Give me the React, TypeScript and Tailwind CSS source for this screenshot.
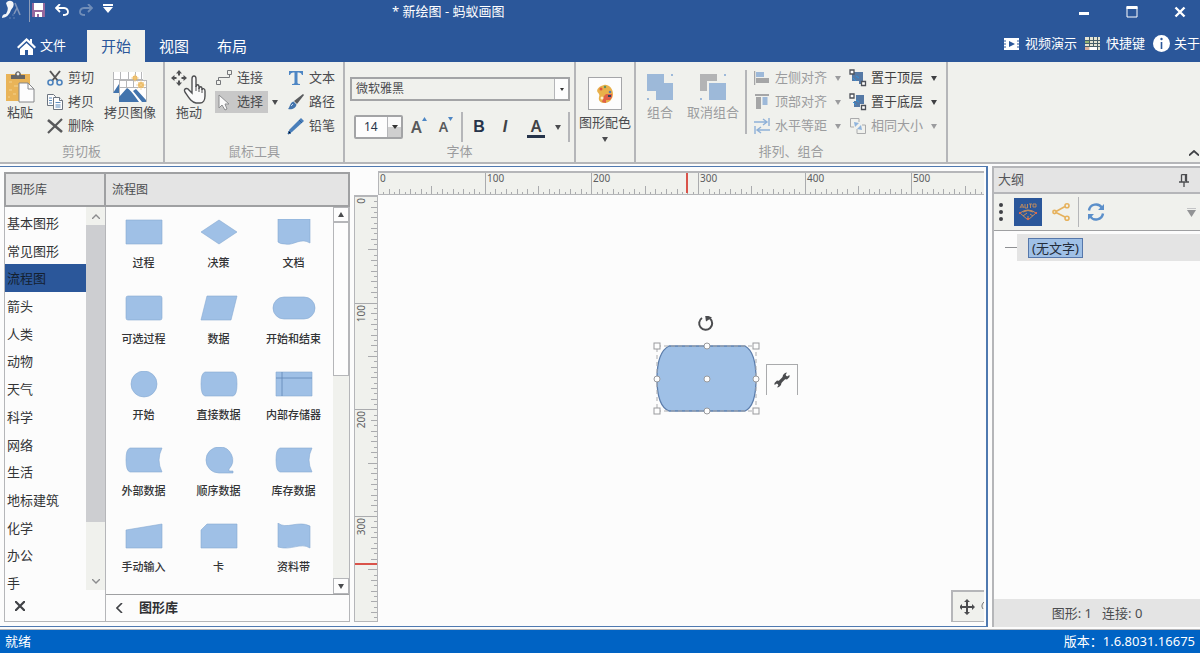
import type { ReactNode } from 'react';

const UNIT = 16 / 15; // screen pixels per ruler unit

const CATEGORIES = ['基本图形', '常见图形', '流程图', '箭头', '人类', '动物', '天气', '科学', '网络', '生活', '地标建筑', '化学', '办公', '手'];

const SHAPES: { label: string; d: string; line?: string }[] = [
  { label: '过程', d: 'M4 1H40V25H4Z' },
  { label: '决策', d: 'M22 1L40 13L22 25L4 13Z' },
  { label: '文档', d: 'M6 0H38V24C28 18 22 27 13 25Q8 25 6 23Z' },
  { label: '可选过程', d: 'M6 1H38Q40 1 40 3V23Q40 25 38 25H6Q4 25 4 23V3Q4 1 6 1Z' },
  { label: '数据', d: 'M10 1H40L34 25H4Z' },
  { label: '开始和结束', d: 'M12 2H32A11 11 0 0 1 32 24H12A11 11 0 0 1 12 2Z' },
  { label: '开始', d: 'M22 0A13 13 0 1 1 22 26A13 13 0 1 1 22 0Z' },
  { label: '直接数据', d: 'M8 1H36Q40 2 40 13Q40 24 36 25H8Q4 24 4 13Q4 2 8 1Z' },
  { label: '内部存储器', d: 'M4 1H40V25H4Z', line: 'M10 1V25M4 7H40' },
  { label: '外部数据', d: 'M8 1H40Q34 13 40 25H8Q4 24 4 13Q4 2 8 1Z' },
  { label: '顺序数据', d: 'M22 0A13 13 0 0 1 32 22V24H36V26H22A13 13 0 1 1 22 0Z' },
  { label: '库存数据', d: 'M8 1H40Q34 13 40 25H8Q4 24 4 13Q4 2 8 1Z' },
  { label: '手动输入', d: 'M4 7L40 1V25H4Z' },
  { label: '卡', d: 'M10 1H40V25H4V7Z' },
  { label: '资料带', d: 'M6 0C14 7 26 -3 38 3V25C28 19 20 28 6 24Z' },
];

function Caret({ className = '' }: { className?: string }) {
  return (
    <svg width="6" height="6" viewBox="0 0 6 6" className={`shrink-0 ${className}`} fill="currentColor"><path d="M0 1H6L3 6Z" /></svg>
  );
}

function Group({ label, className, children }: { label?: string; className: string; children: ReactNode }) {
  return (
    <section className={`flex shrink-0 flex-col border-r-2 border-[#b5b6b9] pt-1 ${className}`}>
      <div className="flex h-[76px]">{children}</div>
      <div className="h-5 text-center leading-[19px] text-[#9b9c9e]">{label}</div>
    </section>
  );
}

function BigButton({ icon, label, className }: { icon: ReactNode; label: string; className: string }) {
  return (
    <button className={`flex shrink-0 flex-col items-center pt-1 leading-4 ${className}`}>
      <span className="flex h-[34px] items-center">{icon}</span>
      <span>{label}</span>
    </button>
  );
}

function SmallButton({ icon, label, caret, className = '' }: { icon: ReactNode; label: string; caret?: boolean; className?: string }) {
  return (
    <button className={`flex h-6 items-center gap-1 ${className}`}>
      <span className="flex w-[18px] shrink-0 justify-center">{icon}</span>
      <span>{label}</span>
      {caret && <Caret className="ml-1" />}
    </button>
  );
}

/* Ribbon icons */
const PasteIcon = () => (
  <svg width="30" height="34" viewBox="0 0 30 34">
    <rect x="1" y="4" width="24" height="27" fill="#e9b458" />
    <path d="M4 12h3M9 16h4M4 20h3M8 24h3M3 27h2" stroke="#f3d28f" />
    <path d="M6 9V5h4c0-5 6-5 6 0h4v4Z" fill="#666" />
    <circle cx="13" cy="4" r="1.4" fill="#f0f1ed" />
    <path d="M14 13h9l6 6v13H14Z" fill="#fdfdfd" stroke="#85878a" />
    <path d="M23 13v6h6" fill="none" stroke="#85878a" />
  </svg>
);
const CutIcon = () => (
  <svg width="16" height="16" viewBox="0 0 16 16" fill="none">
    <path d="M3 1L11 11M13 1L5 11" stroke="#555" strokeWidth="2" />
    <circle cx="3.5" cy="12.5" r="2.5" stroke="#4d83bd" strokeWidth="1.6" />
    <circle cx="12.5" cy="12.5" r="2.5" stroke="#4d83bd" strokeWidth="1.6" />
  </svg>
);
const CopyIcon = () => (
  <svg width="16" height="16" viewBox="0 0 16 16" fill="#fdfdfd" stroke="#6c7580">
    <path d="M.5.5h6l2 2v9h-8Z" />
    <path d="M6.500 3.500h6l3 3v9h-9Z" />
    <path d="M12.500 3.500v3h3" />
    <path d="M2 4h3M2 6.500h3M2 9h3M8.500 8.500h5M8.500 11h5M8.500 13h5" stroke="#5d8dc0" />
  </svg>
);
const DeleteIcon = () => (
  <svg width="18" height="16" viewBox="0 0 18 16" fill="none" stroke="#58595b"><path d="M2 2L16 14" strokeWidth="2.6" /><path d="M16 1L2 15" strokeWidth="2.2" /></svg>
);
const CopyImageIcon = () => (
  <svg width="36" height="32" viewBox="0 0 36 32">
    <path d="M1 1h30v20H1Z" fill="#fff" />
    <path d="M1.500 1v20M8.500 1v12M16.500 1v12M23.500 1v12M29.500 1v8M1 8.500h30" stroke="#b6b7b9" fill="none" />
    <path d="M1 22L7 13V22Z" fill="#4274ad" />
    <path d="M7 9h28v22H7Z" fill="#fff" />
    <path d="M7 9.500h28M7.500 9v18M14.500 9v8M21.500 9v8M34.500 9v22M7 16.500h27" stroke="#b6b7b9" fill="none" />
    <path d="M7 31V26L15 17Q18 18 27 31ZM21 20L24 18L34 29V31H30Z" fill="#4274ad" />
    <circle cx="23" cy="7" r="2.500" fill="#ebb456" />
    <circle cx="29" cy="14" r="3" fill="#ebb456" />
    <path d="M29 9v10M24 14h10M25.500 10.500l7 7M32.500 10.500l-7 7M23 3v8M19 7h8" stroke="#f1ce8d" strokeWidth=".7" />
  </svg>
);
const DragIcon = () => (
  <svg width="36" height="34" viewBox="0 0 36 34">
    <path d="M8 0l3 3.500H9v2H7v-2H5ZM8 16l3-3.500H9v-2H7v2H5ZM0 8l3.500-3v2h2v2h-2v2ZM16 8l-3.500-3v2h-2v2h2v2Z" fill="#505153" />
    <path d="M25 33C20 32 18 28 14 22C12 19 16 17 18 20L21 23V9C21 5 25 5 25 9V17C25 14 28 14 28 17V19C28 16 31 16 31 19V20C31 18 34 18 34 21V26C34 30 32 33 29 33Z" fill="#fafafa" stroke="#505153" strokeWidth="1.400" />
    <path d="M25 16v5M28 18v4M31 19v4" stroke="#505153" />
  </svg>
);
const ConnectIcon = () => (
  <svg width="18" height="16" viewBox="0 0 18 16" fill="none" stroke="#77797c"><path d="M1.500 10.500h4v4h-4ZM12.500.5h4v4h-4ZM3.500 10V7.500H14.500V5" /></svg>
);
const PointerIcon = () => (
  <svg width="14" height="17" viewBox="0 0 14 17"><path d="M2 1V14L5 11L8 16L10 15L8 10H12Z" fill="#fafafa" stroke="#8c8d8f" /></svg>
);
const TextIcon = () => (
  <svg width="16" height="16" viewBox="0 0 16 16"><path d="M1 1H15V5H14Q13.500 2.500 11 2.500H9.500V13Q9.500 14 12 14V15H4V14Q6.500 14 6.500 13V2.500H5Q2.500 2.500 2 5H1Z" fill="#4d86c4" /></svg>
);
const BrushIcon = () => (
  <svg width="16" height="16" viewBox="0 0 16 16"><path d="M15 0L16 1L9 10L6 7Z" fill="#595b5e" /><path d="M5.500 7.500L8.500 10.500C8 14 4 16 0 15C2 13 2 8.500 5.500 7.500Z" fill="#4274ad" /><path d="M3 12l2-2" stroke="#c9daed" /></svg>
);
const PencilIcon = () => (
  <svg width="18" height="18" viewBox="0 0 18 18"><path d="M14 1L17 4L5 15L1 17L2.500 12.500Z" fill="#4a7fba" /><path d="M12 3L15 6M1 17l1-3 2 2Z" stroke="#31619a" /></svg>
);
const PaletteIcon = () => (
  <svg width="18" height="20" viewBox="0 0 18 20">
    <path d="M8 1C12 0 17 4 17 10C17 15 13 19 9 19C5 19 2 17 3 13C4 11 3 10 1.500 8C0 5 4 2 8 1Z" fill="#e8b04a" />
    <path d="M10 10h6v3l-2 3h-4v3l-4-1 2-6Z" fill="#e06048" />
    <circle cx="5" cy="5" r="1.500" fill="#dd5446" /><circle cx="9" cy="3" r="1.200" fill="#5f9160" /><circle cx="14" cy="8" r="1.300" fill="#5579ac" /><circle cx="6" cy="14" r="1.500" fill="#fff0c9" />
    <path d="M12 11h3v2h-3Z" fill="#34445b" />
  </svg>
);
const CombineIcon = ({ split }: { split?: boolean }) => (
  <svg width="28" height="28" viewBox="0 0 28 28">
    <path d="M1 1h17v17H1Z" fill={split ? '#b3b4b5' : '#9db9d9'} />
    {split && <path d="M8 8h18v18H8Z" fill="#f0f1ed" />}
    <path d="M10 10h17v17H10Z" fill="#9db9d9" />
    <path d="M25 1h2v2h-2ZM1 25h2v2H1Z" fill="#9db9d9" />
  </svg>
);
const AlignLeftIcon = () => (
  <svg width="16" height="14" viewBox="0 0 16 14"><path d="M.5 0V14" stroke="#a5a6a7" strokeWidth="1.500" /><path d="M2 1h8v5H2Z" fill="#9db9d9" /><path d="M2 7h13v5H2Z" fill="#a5a6a7" /></svg>
);
const AlignTopIcon = () => (
  <svg width="14" height="16" viewBox="0 0 14 16"><path d="M0 1H14" stroke="#a5a6a7" strokeWidth="2" /><path d="M1 3h5v12H1Z" fill="#a5a6a7" /><path d="M7.500 3h5v8h-5Z" fill="#9db9d9" /></svg>
);
const SpacingIcon = () => (
  <svg width="16" height="16" viewBox="0 0 16 16" fill="none" stroke="#8fb1d8" strokeWidth="1.400"><path d="M0 4H12M9 1l4 3-4 3M15 0V8M16 12H4M7 9l-4 3 4 3M1 8V16" /></svg>
);
const LayerIcon = ({ back }: { back?: boolean }) => (
  <svg width="18" height="18" viewBox="0 0 18 18">
    <path d={back ? 'M7 2h8v9h-4v3H5V8h2Z' : 'M3 3h11v12h-4v-3H3Z'} fill="#5579a5" />
    <path d="M4 9l3 3M7 7l3 2" stroke="#2f93dc" />
    <path d="M1 1h4v4h-4ZM12.500 12.500h4v4h-4Z" fill="#fff" stroke="#4d5158" strokeWidth="1.300" />
  </svg>
);
const SameSizeIcon = () => (
  <svg width="18" height="18" viewBox="0 0 18 18" fill="none"><path d="M5 10H1.500V1.500H10V5M8 12V16.500h8.500V8H13" stroke="#aaabac" /><path d="M5 5l5 1-4 4ZM13 13l-5-1 4-4Z" fill="#8fb4dd" /></svg>
);

function TitleBar() {
  return (
    <div className="flex h-[30px] items-start text-white">
      <svg width="20" height="20" viewBox="0 0 20 20" className="ml-0.5 shrink-0">
        <path d="M4 3Q7-1 11 2Q13 6 9 10Q7 17 0 18Q0 14 4 14Q7 9 5 6Z" fill="#f3f5f8" />
        <path d="M13 3l5 12M15 8l-3 6" stroke="#8095b9" strokeWidth="1.600" />
        <path d="M7 18h2M11 18h2M10 15h2" stroke="#6582b0" />
      </svg>
      <span className="ml-[7px] h-[22px] w-px bg-[#8d9cb8]" />
      <button aria-label="保存" className="ml-0.5 mt-[3px]">
        <svg width="13" height="14" viewBox="0 0 13 14"><path d="M0 0H13V14H0Z" fill="#95689d" /><path d="M2 0h9v7H2ZM3 9h7v5H3Z" fill="#fff" /><path d="M5 11h2v3H5Z" fill="#95689d" /></svg>
      </button>
      <button aria-label="撤销" className="ml-2.5 mt-1">
        <svg width="14" height="12" viewBox="0 0 14 12" fill="none" stroke="#fff" strokeWidth="1.800"><path d="M1 4H9Q13 4.500 13 8Q13 11 8 11M5 0L1 4L5 8" /></svg>
      </button>
      <button aria-label="重做" className="ml-2.5 mt-1">
        <svg width="14" height="12" viewBox="0 0 14 12" fill="none" stroke="#708db8" strokeWidth="1.800"><path d="M13 4H5Q1 4.500 1 8Q1 11 6 11M9 0L13 4L9 8" /></svg>
      </button>
      <button aria-label="自定义" className="ml-2.5 mt-1">
        <svg width="10" height="10" viewBox="0 0 10 10" fill="#fff"><path d="M0 0H10V2H0ZM0 3H10L5 9Z" /></svg>
      </button>
      <h1 className="ml-[279px] grow leading-[22px]">* 新绘图 - 蚂蚁画图</h1>
      <div className="flex gap-8 pr-3 pt-1">
        <button aria-label="最小化"><svg width="16" height="16" viewBox="0 0 16 16"><path d="M3 9.500H13" stroke="#fff" strokeWidth="3" /></svg></button>
        <button aria-label="最大化"><svg width="16" height="16" viewBox="0 0 16 16"><path d="M3 3H13V13H3Z" fill="none" stroke="#fff" /><path d="M2.500 3.500H13.500" stroke="#fff" strokeWidth="3" /></svg></button>
        <button aria-label="关闭"><svg width="16" height="16" viewBox="0 0 16 16"><path d="M3.500 3.500l9 9M12.500 3.500l-9 9" stroke="#fff" strokeWidth="2.400" /></svg></button>
      </div>
    </div>
  );
}

function TabBar() {
  return (
    <div className="flex h-8 items-stretch text-[15px] text-white">
      <button className="flex w-[87px] items-center gap-1 pl-[17px] text-[13px]">
        <svg width="19" height="17" viewBox="0 0 19 17" fill="#fff"><path d="M9.500 0L13 3V1h2v4l4 4-1.500 1.500L9.500 3 1.500 10.500 0 9Z" /><path d="M9.500 5L16 11v6h-5v-5H8v5H3v-6Z" /></svg>
        文件
      </button>
      <nav className="flex">
        <button className="bg-[#f0f1ed] px-3.5 text-[#2b579a]">开始</button>
        <button className="px-3.5">视图</button>
        <button className="px-3.5">布局</button>
      </nav>
      <div className="ml-auto flex h-[27px] items-center gap-2 text-[13px]">
        <button className="flex items-center gap-1.5">
          <svg width="15" height="12" viewBox="0 0 15 12"><path d="M0 0H15V12H0Z" fill="#fff" /><path d="M5 3l6 3-6 3Z" fill="#2b579a" /><path d="M0 3h2M0 6h2M0 9h2M13 3h2M13 6h2M13 9h2" stroke="#2b579a" /></svg>
          视频演示
        </button>
        <button className="flex items-center gap-1.5">
          <svg width="15" height="13" viewBox="0 0 15 13"><path d="M0 0H15V13H0Z" fill="#e4e4d4" /><path d="M0 3.500H15M0 6.500H15M0 9.500H15M4.500 0V9M8.500 0V9M12.500 0V13" stroke="#465f69" /><path d="M0 4h4v2H0Z" fill="#93b374" /><path d="M5 10h7v3H5Z" fill="#fff" /><path d="M0 10h4v3H0Z" fill="#d9ad9b" /></svg>
          快捷键
        </button>
        <button className="flex items-center gap-1">
          <svg width="17" height="17" viewBox="0 0 17 17"><circle cx="8.500" cy="8.500" r="8.500" fill="#fff" /><path d="M8.500 7V14" stroke="#2b579a" strokeWidth="1.600" /><circle cx="8.500" cy="4" r="1.200" fill="#2b579a" /></svg>
          关于
        </button>
      </div>
    </div>
  );
}

function Ribbon() {
  return (
    <div className="flex h-[102px] border-b-2 border-[#b5b6b9] bg-[#f0f1ed]">
      <Group label="剪切板" className="w-[165px]">
        <BigButton icon={<PasteIcon />} label="粘贴" className="w-10" />
        <div className="ml-1.5 w-[52px]">
          <SmallButton icon={<CutIcon />} label="剪切" />
          <SmallButton icon={<CopyIcon />} label="拷贝" />
          <SmallButton icon={<DeleteIcon />} label="删除" />
        </div>
        <BigButton icon={<CopyImageIcon />} label="拷贝图像" className="w-16" />
      </Group>

      <Group label="鼠标工具" className="w-[180px]">
        <BigButton icon={<DragIcon />} label="拖动" className="w-12" />
        <div className="ml-0.5 w-[72px]">
          <SmallButton icon={<ConnectIcon />} label="连接" />
          <div className="flex h-6 items-center">
            <SmallButton icon={<PointerIcon />} label="选择" className="h-[22px]! w-[53px] bg-[#c8c8c8]" />
            <button aria-label="选择方式" className="ml-1"><Caret /></button>
          </div>
        </div>
        <div>
          <SmallButton icon={<TextIcon />} label="文本" />
          <SmallButton icon={<BrushIcon />} label="路径" />
          <SmallButton icon={<PencilIcon />} label="铅笔" />
        </div>
      </Group>

      <Group label="字体" className="w-[231px]">
        <div className="flex w-full flex-col pl-[5px] pr-1 pt-[11px]">
          <div className="relative flex">
            <select aria-label="字体" className="h-6 w-full appearance-none border-2 border-[#a3a4a6] bg-transparent pl-1 text-[12px]">
              <option>微软雅黑</option>
            </select>
            <span className="pointer-events-none absolute inset-y-0.5 right-0.5 flex w-3.5 items-center justify-center border-l border-[#b5b6b9] bg-[#fdfdfd]">
              <svg width="4" height="3" viewBox="0 0 4 3"><path d="M0 0H4L2 3Z" fill="#333" /></svg>
            </span>
          </div>
          <div className="mt-3.5 flex h-6 items-center">
            <div className="relative ml-1 flex">
              <select aria-label="字号" className="h-6 w-[49px] appearance-none rounded-xs border-2 border-[#a3a4a6] bg-[#fdfdfd] pl-2 text-[12px] text-[#26344a]">
                <option>14</option>
              </select>
              <span className="pointer-events-none absolute inset-y-0.5 right-0.5 flex w-3.5 items-center justify-center border-l border-[#b5b6b9] bg-linear-to-b from-[#fafafa] from-50% to-[#cfcfcf] to-50%">
                <svg width="6" height="4" viewBox="0 0 6 4"><path d="M0 0H6L3 4Z" fill="#333" /></svg>
              </span>
            </div>
            <button className="ml-2 flex items-start text-[16px] font-semibold leading-5 text-[#58595b]">A<svg width="5" height="4" viewBox="0 0 5 4"><path d="M2.500 0L5 4H0Z" fill="#4d86c4" /></svg></button>
            <button className="ml-3 flex items-start text-[14px] font-semibold leading-5 text-[#58595b]">A<svg width="5" height="4" viewBox="0 0 5 4"><path d="M0 0H5L2.500 4Z" fill="#4d86c4" /></svg></button>
            <span className="ml-2 h-[30px] w-0.5 bg-[#b5b6b9]" />
            <button className="ml-2.5 font-['Liberation_Sans',sans-serif] text-[16px] font-bold leading-5 text-[#26344a]">B</button>
            <button className="ml-[18px] font-['Liberation_Sans',sans-serif] text-[16px] font-bold italic leading-5 text-[#404246]">I</button>
            <button className="ml-5 flex w-[18px] flex-col items-center border-b-[3px] border-[#26344a] text-[16px] font-semibold leading-[18px] text-[#404246]">A</button>
            <button aria-label="字体颜色" className="ml-2.5"><Caret /></button>
            <span className="ml-auto h-[30px] w-0.5 bg-[#b5b6b9]" />
          </div>
        </div>
      </Group>

      <Group className="w-[60px]">
        <button className="flex w-full flex-col items-center pt-[11px] leading-4">
          <span className="flex size-[34px] items-center justify-center border border-[#a5a6a9] bg-[#fdfdfd]"><PaletteIcon /></span>
          <span className="mt-1">图形配色</span>
          <Caret className="mt-1.5" />
        </button>
      </Group>

      <Group label="排列、组合" className="w-[312px] text-[#9b9c9e]">
        <BigButton icon={<CombineIcon />} label="组合" className="w-12" />
        <BigButton icon={<CombineIcon split />} label="取消组合" className="w-[58px]" />
        <span className="ml-[3px] mt-1 h-16 w-0.5 bg-[#b5b6b9]" />
        <div className="ml-1.5 w-[96px]">
          <SmallButton icon={<AlignLeftIcon />} label="左侧对齐" caret />
          <SmallButton icon={<AlignTopIcon />} label="顶部对齐" caret />
          <SmallButton icon={<SpacingIcon />} label="水平等距" caret />
        </div>
        <div>
          <SmallButton icon={<LayerIcon />} label="置于顶层" caret className="text-[#3f4043]" />
          <SmallButton icon={<LayerIcon back />} label="置于底层" caret className="text-[#3f4043]" />
          <SmallButton icon={<SameSizeIcon />} label="相同大小" caret />
        </div>
      </Group>

      <button aria-label="折叠功能区" className="ml-auto self-end pb-1.5 pr-px">
        <svg width="10" height="6" viewBox="0 0 10 6" fill="none" stroke="#404246" strokeWidth="1.800"><path d="M0 5.500L5 1L10 5.500" /></svg>
      </button>
    </div>
  );
}

function Library() {
  return (
    <div className="mt-px flex w-[346px] shrink-0">
      <div className="flex w-[102px] flex-col border-x border-b border-[#b5b6b9]">
        <h2 className="-mx-px h-[35px] shrink-0 border-2 border-[#9fa0a2] bg-[#e4e4e4] pl-[5px] text-[12px] leading-[31px] text-[#4b4c4f]">图形库</h2>
        <div className="flex min-h-0 flex-1">
          <div className="min-w-0 flex-1 overflow-hidden pt-0.5">
            <ul className="flex h-[388px] flex-col text-[#333436]">
              {CATEGORIES.map(c => (
                <li key={c} className={`flex flex-1 items-center pl-0.5 leading-4 ${c === '流程图' ? 'bg-[#2b579a] text-[#14202f]' : ''}`}>{c}</li>
              ))}
            </ul>
          </div>
          <div className="flex w-[19px] flex-col items-center bg-[#f0f1ed]">
            <span className="flex h-[18px] items-center"><svg width="8" height="5" viewBox="0 0 8 5" fill="none" stroke="#8b8c8e" strokeWidth="1.400"><path d="M0 5L4 1L8 5" /></svg></span>
            <span className="h-[297px] w-full bg-[#cdced1]" />
            <span className="mt-auto flex h-[18px] items-center"><svg width="8" height="5" viewBox="0 0 8 5" fill="none" stroke="#8b8c8e" strokeWidth="1.400"><path d="M0 0L4 4L8 0" /></svg></span>
          </div>
        </div>
        <button aria-label="关闭图形库" className="flex h-[31px] shrink-0 items-center pl-2.5">
          <svg width="10" height="10" viewBox="0 0 10 10"><path d="M0 0L10 10M10 0L0 10" stroke="#404246" strokeWidth="2.200" /></svg>
        </button>
      </div>

      <div className="flex flex-1 flex-col border-b border-r border-[#b5b6b9]">
        <h2 className="-mr-px h-[35px] shrink-0 border-2 border-l-0 border-[#9fa0a2] bg-[#e4e4e4] pl-1.5 text-[12px] leading-[31px] text-[#4b4c4f]">流程图</h2>
        <div className="flex min-h-0 flex-1">
          <div className="grid min-w-0 flex-1 auto-rows-[76px] grid-cols-3 overflow-hidden pr-0.5 pt-3 text-[11px] font-medium text-[#333436]">
            {SHAPES.map(s => (
              <div key={s.label} className="flex flex-col items-center">
                <svg width="44" height="28" viewBox="0 0 44 28" fill="#9fc0e6" stroke="#86a9d2" strokeWidth=".6">
                  <path d={s.d} />
                  {s.line && <path d={s.line} stroke="#5f86b5" strokeWidth=".8" />}
                </svg>
                <span className="mt-2 leading-4">{s.label}</span>
              </div>
            ))}
          </div>
          <div className="flex w-4 flex-col bg-[#f0f1ed]">
            <span className="flex h-4 items-center justify-center border border-b-2 border-[#b5b6b9] bg-[#fdfdfd]"><Caret className="rotate-180" /></span>
            <span className="h-[153px] border border-t-0 border-[#b5b6b9] bg-[#fdfdfd]" />
            <span className="mt-auto flex h-4 items-center justify-center border border-[#b5b6b9] bg-[#fdfdfd]"><Caret /></span>
          </div>
        </div>
        <button className="flex h-[27px] shrink-0 items-center gap-4 border-t border-[#9fa0a2] pl-2.5 font-bold text-[#303134]">
          <svg width="7" height="10" viewBox="0 0 7 10" fill="none" stroke="#404246" strokeWidth="1.600"><path d="M6 0L1 5L6 10" /></svg>
          图形库
        </button>
      </div>
    </div>
  );
}

/* The page is 570 x 400 units, the rulers end with it */
function Ruler({ vertical }: { vertical?: boolean }) {
  const ticks = Array.from({ length: vertical ? 80 : 114 }, (_, i) => i * 5);
  return (
    <svg className="block size-full" fontSize="10" fill="#5c5d60">
      {ticks.map(v => {
        const p = Math.round(v * UNIT) - 0.5;
        const len = v % 100 === 0 ? 24 : v % 50 === 0 ? 9 : v % 10 === 0 ? 6 : 3;
        return vertical
          ? <path key={v} d={`M22 ${p}H${22 - len}`} stroke="#aaabae" />
          : <path key={v} d={`M${p} 22V${22 - len}`} stroke="#aaabae" />;
      })}
      {ticks.filter(v => v % 100 === 0).map(v => {
        const p = Math.round(v * UNIT) + 1;
        return vertical
          ? <text key={v} textAnchor="end" transform={`translate(10 ${p}) rotate(-90)`}>{v}</text>
          : <text key={v} x={p} y="9">{v}</text>;
      })}
      {vertical ? <path d="M0 367H22" stroke="#d9534a" strokeWidth="2" /> : <path d="M308 0V20" stroke="#d9534a" strokeWidth="2" />}
    </svg>
  );
}

function Canvas() {
  const handles = [[5, 30], [104, 30], [5, 95], [104, 95]];
  const dots = [[55, 30], [5, 63], [55, 63], [104, 63], [55, 95]];
  return (
    <div className="ml-1 grid min-w-0 flex-1 grid-cols-[24px_minmax(0,1fr)] grid-rows-[24px_minmax(0,1fr)]">
      <div />
      <div className="overflow-hidden border-b border-l border-t-2 border-[#b5b6b9] bg-[#f0f1ed]"><Ruler /></div>
      <div className="overflow-hidden border-b border-x border-t-2 border-[#b5b6b9] bg-[#f0f1ed]"><Ruler vertical /></div>
      <div className="relative overflow-hidden">
        <svg width="110" height="104" viewBox="0 0 110 104" className="absolute left-[274px] top-[121px]">
          <path d="M50 2A6.500 6.500 0 1 0 58 2.500" fill="none" stroke="#4b4c4f" strokeWidth="2" />
          <path d="M53 -1.500L60 1.500L54 5.500Z" fill="#4b4c4f" />
          <path d="M17 30H93Q104 36 104 63Q104 90 93 95H17Q5 90 5 63Q5 36 17 30Z" fill="#9fc0e6" stroke="#5c7dab" strokeWidth="1.300" />
          <path d="M5 30H104V95H5Z" fill="none" stroke="#aaabae" strokeDasharray="4 3" />
          <g fill="#fdfdfd" stroke="#999a9d">
            {handles.map(([x, y]) => <rect key={`${x}-${y}`} x={x - 3} y={y - 3} width="6" height="6" />)}
            {dots.map(([x, y]) => <circle key={`${x}-${y}`} cx={x} cy={y} r="3" />)}
          </g>
        </svg>
        <button aria-label="设置" className="absolute left-[388px] top-[169px] flex h-[31px] w-8 items-center justify-center border border-b-0 border-[#a9aaac] bg-[#fcfcfc]">
          <svg width="16" height="16" viewBox="0 0 16 16"><path d="M4 12L12 4" stroke="#4b4c4f" strokeWidth="3.200" /><path d="M11 1L13 .5 11.500 3 13 4.500 15.500 3 15.500 5 13 7.500 10.500 7 8.500 5.500 9 3ZM5 15L3 15.500 4.500 13 3 11.500 .5 13 .5 11 3 8.500 5.500 9 7.500 10.500 7 13Z" fill="#4b4c4f" /></svg>
        </button>
        <button aria-label="导航" className="absolute bottom-0 right-0 flex h-8 w-[33px] items-center overflow-hidden border-b border-l-2 border-t-2 border-[#b5b6b9] bg-[#f0f1ed] pl-[7px]">
          <svg width="26" height="16" viewBox="0 0 26 16" className="shrink-0"><path d="M7 2V14M1 8H13" stroke="#4b4c4f" strokeWidth="2" /><path d="M7 0l3 3H4ZM7 16l3-3H4ZM-1 8l3-3v6ZM15 8l-3-3v6Z" fill="#4b4c4f" /><path d="M25 2Q20 6 23 10" fill="none" stroke="#77787a" /></svg>
        </button>
      </div>
    </div>
  );
}

function Outline() {
  return (
    <aside className="ml-1 flex w-[208px] shrink-0 flex-col border-l-2 border-t-2 border-[#b5b6b9]">
      <div className="flex h-[26px] shrink-0 items-center justify-between border-b-2 border-[#b5b6b9] bg-[#e4e4e4] pl-1 pr-[11px] text-[#55565a]">
        <h2>大纲</h2>
        <button aria-label="固定"><svg width="10" height="13" viewBox="0 0 10 13" fill="none" stroke="#4b4c4f"><path d="M2.500 0.500H7.500V7.500M2.500 .5V7.500M6.500 1V7M0 8H10M5 8V13" strokeWidth="1.300" /></svg></button>
      </div>
      <div className="flex h-[37px] shrink-0 items-center border-b border-[#9fa0a2] bg-[#f0f1ed] pl-[5px] pr-1">
        <svg width="4" height="18" viewBox="0 0 4 18" fill="#404246"><circle cx="2" cy="2" r="2" /><circle cx="2" cy="9" r="2" /><circle cx="2" cy="16" r="2" /></svg>
        <button aria-label="自动布局" className="ml-[11px] flex size-7 items-center justify-center bg-[#2b579a]">
          <svg width="20" height="20" viewBox="0 0 20 20" fill="none" stroke="#c88e5c">
            <path d="M2 6L4 2L6 6M3 5H5M7 2V6H9.500V2M11 2H14M12.500 2V6M15 2H18V5H15Z" strokeWidth=".9" />
            <path d="M2 11Q10 5 18 11L10 18ZM5 10Q10 7 15 10M5 14L9 11M10 18L10 14M15 14L12 12" />
            <path d="M1 10h2v2H1ZM9 16h2v2H9ZM17 10h2v2h-2Z" fill="#dd684c" stroke="none" />
          </svg>
        </button>
        <button aria-label="连接关系" className="ml-2.5">
          <svg width="18" height="18" viewBox="0 0 18 18" fill="none" stroke="#e6b25d" strokeWidth="1.600"><path d="M4 8.500L13 3.500M4 9.500L13 14" /><circle cx="2.500" cy="9" r="1.600" /><circle cx="15" cy="2.800" r="2" /><circle cx="15" cy="15.200" r="2" /></svg>
        </button>
        <span className="ml-2 h-[30px] w-px bg-[#b5b6b9]" />
        <button aria-label="刷新" className="ml-2">
          <svg width="18" height="18" viewBox="0 0 18 18" fill="none" stroke="#5b8fca" strokeWidth="2.400"><path d="M2 7.500A7 7 0 0 1 15 5M16 10.500A7 7 0 0 1 3 13" /><path d="M17 1V7H11ZM1 17V11H7Z" fill="#5b8fca" stroke="none" /></svg>
        </button>
        <button aria-label="更多" className="ml-auto"><svg width="9" height="9" viewBox="0 0 9 9"><path d="M0 .5H9" stroke="#c3c4c6" /><path d="M0 2H9L4.500 9Z" fill="#929395" /></svg></button>
      </div>
      <div className="flex-1 pt-[3px]">
        <div className="flex h-[27px] items-center">
          <span className="ml-[11px] h-px w-3 bg-[#8f9093]" />
          <div className="flex h-full flex-1 items-center bg-[#e4e4e4] pl-[11px]">
            <span className="h-5 border border-[#5577ab] bg-[#9fc0e6] px-[3px] leading-[18px] text-[#242d3a]">(无文字)</span>
          </div>
        </div>
      </div>
      <div className="h-7 shrink-0 bg-[#e4e4e4] text-center leading-7 text-[#4b4c4f]">图形: 1&nbsp;&nbsp; 连接: 0</div>
    </aside>
  );
}

export default function App() {
  return (
    <div className="flex h-screen flex-col overflow-hidden whitespace-nowrap bg-[#fcfcfc] font-['Noto_Sans','Noto_Sans_CJK_SC',sans-serif] text-[13px] text-[#4b4c4f]">
      <header className="shrink-0">
        <div className="bg-[#2b579a]">
          <TitleBar />
          <TabBar />
        </div>
        <Ribbon />
      </header>
      <main className="flex min-h-0 flex-1 border-b border-[#b5b6b9] pb-0.5 pt-0.5">
        <div className="flex min-w-0 flex-1 border-y border-r-2 border-[#4f79b0] pb-1 pl-1 pr-0.5 pt-1">
          <Library />
          <Canvas />
        </div>
        <Outline />
      </main>
      <footer className="flex h-[23px] shrink-0 items-center justify-between bg-[#0063c4] px-[5px] text-white">
        <span>就绪</span>
        <span>版本：1.6.8031.16675</span>
      </footer>
    </div>
  );
}
